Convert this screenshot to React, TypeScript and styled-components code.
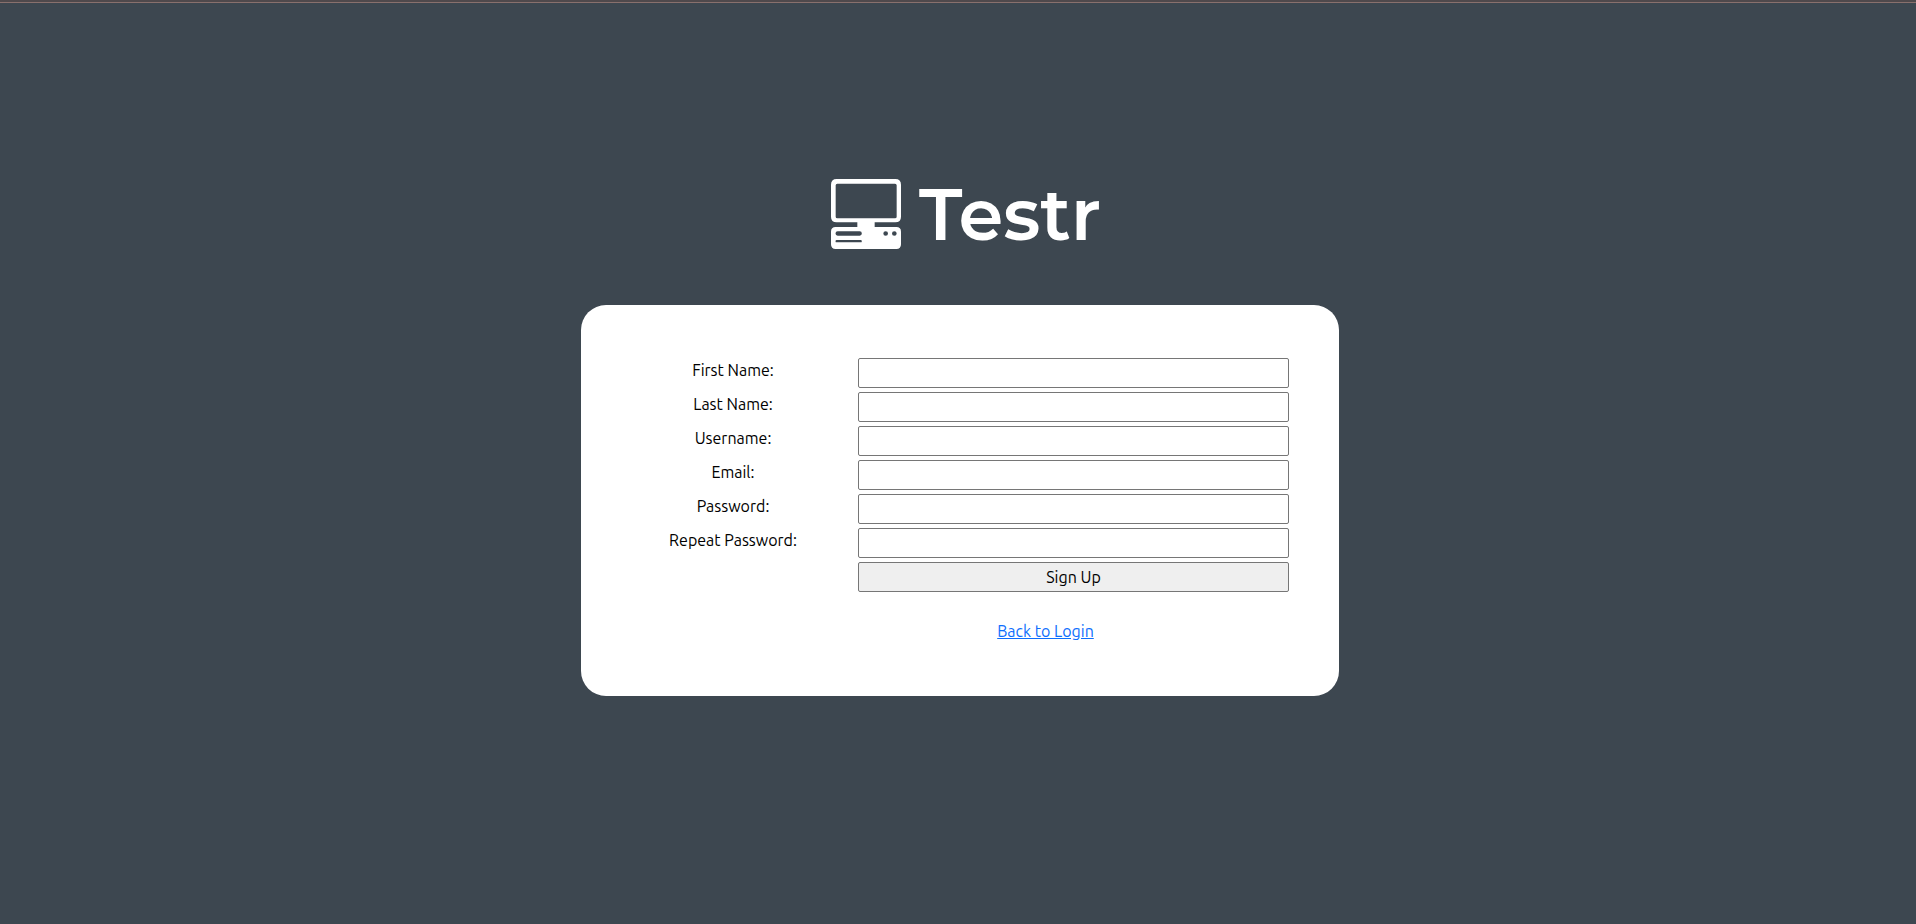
import React from "react";
import styled, { createGlobalStyle } from "styled-components";

const GlobalStyle = createGlobalStyle`
  *, *::before, *::after { box-sizing: border-box; }
  body {
    margin: 0;
    background: #3d4750;
    color: #000;
    font-family: Ubuntu, "Noto Sans", sans-serif;
    font-size: 16px;
    line-height: 24px;
  }
`;

const Page = styled.div`
  min-height: 100vh;
  border-top: 2px solid #4f494c;
`;

const TopRule = styled.div`
  height: 1px;
  background: #89706d;
`;

const Content = styled.main`
  display: flex;
  flex-direction: column;
  align-items: center;
  padding: 176px 0 48px 4px;
`;

const Brand = styled.h1`
  display: flex;
  align-items: center;
  gap: 18px;
  width: 258px;
  height: 70px;
  margin: 0 0 56px;
  color: #fff;
  font-family: Montserrat, Lato, sans-serif;
  font-size: 72px;
  font-weight: 600;
  line-height: 68px;
  white-space: nowrap;

  svg {
    flex: none;
  }
`;

const Card = styled.form`
  width: 100%;
  max-width: 758px;
  padding: 53px 50px 49px;
  border-radius: 25px;
  background: #fff;
`;

const Row = styled.div`
  display: grid;
  grid-template-columns: 204px 1fr;
  column-gap: 23px;
  margin-bottom: 4px;
`;

const Label = styled.label`
  text-align: center;
`;

const Field = styled.input`
  width: 100%;
  height: 30px;
  padding: 1px 2px;
  border: 1px solid #767676;
  border-radius: 2px;
  background: #fff;
  font: inherit;
`;

const SubmitButton = styled.button`
  grid-column: 2;
  height: 30px;
  padding: 0 6px;
  border: 1px solid #767676;
  border-radius: 2px;
  background: #efefef;
  color: #000;
  font: inherit;
`;

const LinkCell = styled.div`
  grid-column: 2;
  padding: 27px 56px 0 0;
  text-align: center;
`;

const BackLink = styled.a`
  color: #0d6efd;
  text-decoration: underline;
`;

const ComputerIcon = () => (
  <svg width="70" height="70" viewBox="0 0 210 210" aria-hidden="true">
    <path
      fill="#fff"
      fillRule="evenodd"
      d="M17 0H193Q210 0 210 17V113Q210 130 193 130H131V144H196Q210 144 210 158V196Q210 210 196 210H14Q0 210 0 196V158Q0 144 14 144H79V130H17Q0 130 0 113V17Q0 0 17 0ZM19 14Q14 14 14 19V113Q14 118 19 118H192Q197 118 197 113V19Q197 14 192 14ZM20 157A6.5 6.5 0 0 0 20 170H86A6.5 6.5 0 0 0 86 157ZM17 183A3.5 3.5 0 0 0 17 190H89A3.5 3.5 0 0 0 89 183ZM157 163.500A7 7 0 1 0 171 163.500A7 7 0 1 0 157 163.500ZM183 163.500A7 7 0 1 0 197 163.500A7 7 0 1 0 183 163.500Z"
    />
  </svg>
);

const fields = [
  { id: "first-name", label: "First Name:", type: "text" },
  { id: "last-name", label: "Last Name:", type: "text" },
  { id: "username", label: "Username:", type: "text" },
  { id: "email", label: "Email:", type: "email" },
  { id: "password", label: "Password:", type: "password" },
  { id: "repeat-password", label: "Repeat Password:", type: "password" },
];

export default function App() {
  return (
    <>
      <GlobalStyle />
      <Page>
        <TopRule />
        <Content>
          <Brand>
            <ComputerIcon />
            Testr
          </Brand>
          <Card onSubmit={(event: React.FormEvent) => event.preventDefault()}>
            {fields.map(({ id, label, type }) => (
              <Row key={id}>
                <Label htmlFor={id}>{label}</Label>
                <Field id={id} name={id} type={type} />
              </Row>
            ))}
            <Row>
              <SubmitButton type="submit">Sign Up</SubmitButton>
              <LinkCell>
                <BackLink href="#login">Back to Login</BackLink>
              </LinkCell>
            </Row>
          </Card>
        </Content>
      </Page>
    </>
  );
}
